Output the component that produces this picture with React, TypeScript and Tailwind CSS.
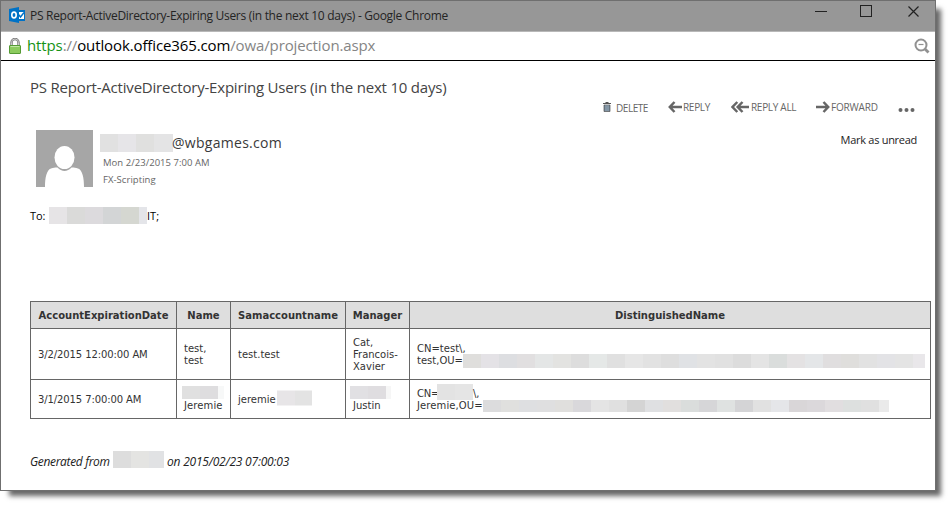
import React from "react";

const SEGOE = "font-['Open_Sans','Noto_Sans',sans-serif]";

function Mosaic({ colors, className, last = "w-[18px]" }: { colors: string[]; className: string; last?: string }) {
  return (
    <span className={`flex shrink-0 ${className}`}>
      {colors.map((c, i) => (
        <span key={i} className={`h-full shrink-0 ${i === colors.length - 1 ? last : "w-[18px]"} ${c}`} />
      ))}
    </span>
  );
}

const dnFirst = [
  "bg-[#dfdedc]", "bg-[#e4e2e6]", "bg-[#dddee1]", "bg-[#e1dfe0]", "bg-[#e4e6e6]", "bg-[#e3e3e1]", "bg-[#dddddd]",
  "bg-[#e5e8e7]", "bg-[#e0e0e0]", "bg-[#e6e6e6]", "bg-[#e2e2e2]", "bg-[#dedede]", "bg-[#e0e2e5]", "bg-[#e3e3e3]",
  "bg-[#e1e1e1]", "bg-[#dcdcdc]", "bg-[#e4e4e4]", "bg-[#dadddc]", "bg-[#e4e2e3]", "bg-[#e4e6e8]", "bg-[#e0dedf]",
  "bg-[#dfdedc]", "bg-[#e2e2e2]", "bg-[#e3e3e6]", "bg-[#e4e4e4]", "bg-[#e9e7ea]",
];
const dnSecond = [
  "bg-[#dcdcdd]", "bg-[#e0e0de]", "bg-[#dedfe1]", "bg-[#dfdfe0]", "bg-[#e0dfdd]", "bg-[#d9d8db]", "bg-[#e4e4e4]",
  "bg-[#e0e0e0]", "bg-[#d4d4d4]", "bg-[#dfe0e2]", "bg-[#e1dfde]", "bg-[#dadddc]", "bg-[#d6d6d8]", "bg-[#dfe2e1]",
  "bg-[#d4d4d6]", "bg-[#e1e1e1]", "bg-[#e5e6e9]", "bg-[#d9d6d8]", "bg-[#dbd8db]", "bg-[#e1dee0]", "bg-[#dde0df]",
  "bg-[#e0e0e0]", "bg-[#eaeaea]",
];

function TitleBar() {
  return (
    <div className="flex h-[30px] shrink-0 items-start bg-[#979797] pl-2">
      <svg className="mt-[6px] shrink-0" width="16" height="17" viewBox="0 0 16 17">
        <rect x="8" y="3" width="8" height="11" fill="#0072c6" />
        <path d="M9 5h6v7H9z" fill="#fff" />
        <path d="M9.500 7.500l2 2.500 3.500-4.500" fill="none" stroke="#0072c6" strokeWidth="1.400" />
        <path d="M0 2L10 0v16L0 14z" fill="#0072c6" />
        <ellipse cx="5" cy="8" rx="2.200" ry="2.900" fill="none" stroke="#fff" strokeWidth="1.600" />
      </svg>
      <span className="ml-[5px] mt-[5px] whitespace-nowrap text-[12px] leading-5 tracking-[-0.29px] text-[#242424]">
        PS Report-ActiveDirectory-Expiring Users (in the next 10 days) - Google Chrome
      </span>
      <svg className="ml-auto mr-[14px] mt-[3px]" width="106" height="16" viewBox="0 0 106 16" fill="none" stroke="#222" shapeRendering="crispEdges">
        <path d="M0 7.500h12" />
        <rect x="45.500" y="1.500" width="11" height="11" />
        <path d="M93.500 2.500l10 10M103.500 2.500l-10 10" shapeRendering="auto" strokeWidth="1.200" />
      </svg>
    </div>
  );
}

function AddressBar() {
  return (
    <div className="flex h-[30px] shrink-0 items-start border-b border-t border-b-black border-t-[#b8b8b8] bg-white pl-2">
      <svg className="mt-[6px] shrink-0" width="12" height="16" viewBox="0 0 12 16">
        <path d="M2.500 8V4.500a3.500 3.500 0 0 1 7 0V8" fill="none" stroke="#777" strokeWidth="2.400" />
        <path d="M2.500 8V4.500a3.500 3.500 0 0 1 7 0V8" fill="none" stroke="#ccc" strokeWidth="1" />
        <rect x=".5" y="7.500" width="11" height="8" rx=".5" fill="#8ccb5e" stroke="#559a35" />
        <path d="M1.500 8.500h9" stroke="#c1e6a4" />
      </svg>
      <span className="ml-[6px] whitespace-nowrap text-[15px] leading-[26px] tracking-[-0.12px] text-[#858585]">
        <span className="text-[#159315]">https</span>://<span className="text-black">outlook.office365.com</span>/owa/projection.aspx
      </span>
      <svg className="ml-auto mr-[5px] mt-[6px]" width="16" height="16" viewBox="0 0 16 16" fill="none" stroke="#919191">
        <circle cx="7" cy="7" r="5.500" strokeWidth="2" />
        <path d="M11 11l3.500 3.500" strokeWidth="2.800" />
        <path d="M4.500 6.500h5" strokeWidth="1.200" />
      </svg>
    </div>
  );
}

function Actions() {
  return (
    <div className="flex h-5 items-center whitespace-nowrap pl-[573px] text-[10px] leading-5 text-[#666]">
      <svg width="8" height="10" viewBox="0 0 8 10" className="shrink-0">
        <path d="M0 1.500h8M2.500 .5h3" stroke="#555" />
        <path d="M1 3h6v6.500H1z" fill="#708496" stroke="#555" strokeWidth=".7" />
        <path d="M3 3v6M5 3v6" stroke="#a9b9c5" strokeWidth=".7" />
      </svg>
      <span className="ml-[5px] mt-[2px] w-[52px] tracking-[-0.45px]">DELETE</span>
      <svg width="14" height="12" viewBox="0 0 14 12" fill="none" stroke="#666" className="shrink-0">
        <path d="M1.500 6H14M6.500 1L1.800 6l4.700 5" strokeWidth="2.500" />
      </svg>
      <span className="ml-[1px] w-[48px] tracking-[-0.3px]">REPLY</span>
      <svg width="18" height="12" viewBox="0 0 18 12" fill="none" stroke="#666" className="shrink-0">
        <path d="M6 6h12M6.300 1L1.500 6l4.800 5M11.500 1L6.700 6l4.800 5" strokeWidth="2.500" />
      </svg>
      <span className="ml-[2px] w-[65px] tracking-[-0.3px]">REPLY ALL</span>
      <svg width="14" height="12" viewBox="0 0 14 12" fill="none" stroke="#666" className="shrink-0">
        <path d="M0 6h12.500M7.500 1l4.700 5-4.700 5" strokeWidth="2.500" />
      </svg>
      <span className="ml-[1px] w-[67px] tracking-[-0.2px]">FORWARD</span>
      <svg width="17" height="6" viewBox="0 0 17 6" fill="#666" className="mt-[6px] shrink-0">
        <circle cx="2.500" cy="3" r="2" /><circle cx="8.500" cy="3" r="2" /><circle cx="14.500" cy="3" r="2" />
      </svg>
    </div>
  );
}

function Sender() {
  return (
    <div className="flex pl-[6px]">
      <svg width="57" height="57" viewBox="0 0 57 57" className="mt-[1px] shrink-0">
        <rect width="57" height="57" fill="#a6a6a6" />
        <ellipse cx="28.500" cy="27.500" rx="10" ry="11.500" fill="#fff" />
        <path d="M9 57c0-9 1.500-17 6-18.500 3-1 5-1.200 6.500-1 4 4.600 10 4.600 14 0 1.500-.2 3.500 0 6.500 1C46.500 40 48 48 48 57z" fill="#fff" />
      </svg>
      <div className="ml-[7px] flex flex-col">
        <div className="flex h-[27px] items-center">
          <Mosaic colors={["bg-[#e1e1e1]", "bg-[#e6e5e8]", "bg-[#e0e0df]", "bg-[#e4e4e5]"]} last="w-[19px]" className="h-[18px]" />
          <span className="-ml-px text-[14px] leading-5 tracking-[0.28px] text-[#3a3a3a]">@wbgames.com</span>
        </div>
        <span className="ml-[3px] text-[9.5px] leading-[14px] tracking-[0.04px] text-[#666]">Mon 2/23/2015 7:00 AM</span>
        <span className="ml-[3px] mt-[3px] text-[9.5px] leading-[14px] tracking-[0.05px] text-[#666]">FX-Scripting</span>
      </div>
      <span className="ml-auto mr-[18px] mt-[1px] text-[11px] leading-5 tracking-[-0.28px] text-[#222]">Mark as unread</span>
    </div>
  );
}

const cell = "flex flex-col justify-center border-l border-t border-[#666] pl-[7px] pt-[2px]";
const head = "flex items-center justify-center border-l border-t border-[#666] bg-[#dedede] pt-[2px] text-[10px] font-bold";

function ReportTable() {
  return (
    <div className="grid w-[901px] grid-cols-[146px_54px_115px_64px_521px] grid-rows-[27px_51px_39px] whitespace-nowrap border-b border-r border-[#666] font-['DejaVu_Sans',sans-serif] text-[10px] leading-[12px] text-[#333]">
      {["AccountExpirationDate", "Name", "Samaccountname", "Manager", "DistinguishedName"].map((h) => (
        <div key={h} className={head}>{h}</div>
      ))}
      <div className={cell}><span className="tracking-[-0.1px]">3/2/2015 12:00:00 AM</span></div>
      <div className={cell}><span>test,</span><span>test</span></div>
      <div className={cell}>test.test</div>
      <div className={cell}><span>Cat,</span><span>Francois-</span><span>Xavier</span></div>
      <div className={cell}>
        <span>CN=test\,</span>
        <span className="flex h-3"><span className="w-[46px]">test,OU=</span><Mosaic colors={dnFirst} last="w-[12px]" className="-mt-px h-[14px]" /></span>
      </div>
      <div className={cell}><span className="tracking-[-0.1px]">3/1/2015 7:00:00 AM</span></div>
      <div className={cell}>
        <Mosaic colors={["bg-[#e0e0e0]", "bg-[#dedddf]", "bg-[#f7f8f8]"]} last="w-[6px]" className="-ml-[2px] -mt-[2px] mb-[1px] h-[13px]" />
        <span className="tracking-[0.1px]">Jeremie</span>
      </div>
      <div className={cell}>
        <span className="flex items-center"><span className="w-[39px]">jeremie</span><Mosaic colors={["bg-[#e7e5e7]", "bg-[#e3e3e3]"]} last="w-[17px]" className="-my-2 h-[15px] -translate-y-[2.5px]" /></span>
      </div>
      <div className={cell}>
        <Mosaic colors={["bg-[#e1e0e3]", "bg-[#dfdde0]", "bg-[#f6f6f6]"]} last="w-[5px]" className="-ml-[3px] -mt-[2px] mb-[1px] h-[13px]" />
        <span>Justin</span>
      </div>
      <div className={cell}>
        <span className="flex h-3"><span className="w-[20px] tracking-[-0.2px]">CN=</span><Mosaic colors={["bg-[#e3e3e3]", "bg-[#e5e5e5]"]} className="-mt-[4px] h-4" /><span>\,</span></span>
        <span className="flex h-3"><span className="w-[66px] tracking-[0.1px]">Jeremie,OU=</span><Mosaic colors={dnSecond} last="w-[10px]" className="h-[12px]" /></span>
      </div>
    </div>
  );
}

export default function App() {
  return (
    <div className={`h-[506px] w-[951px] overflow-hidden bg-white ${SEGOE}`}>
      <div className="flex h-[491px] w-[936px] flex-col border border-[#6f6f6f] bg-white shadow-[7px_7px_5px_-2px_rgba(0,0,0,0.6)]">
        <TitleBar />
        <AddressBar />
        <main className="flex flex-col pl-[29px]">
          <h1 className="mt-[15px] whitespace-nowrap text-[15px] leading-[22px] tracking-[-0.2px] text-[#444]">
            PS Report-ActiveDirectory-Expiring Users (in the next 10 days)
          </h1>
          <div className="-mt-[1px]"><Actions /></div>
          <div className="mt-[12px]"><Sender /></div>
          <div className="mt-[20px] flex h-[17px] items-center text-[11px] text-black">
            <span className="mt-px w-[19px] tracking-[-0.1px]">To:</span>
            <Mosaic colors={["bg-[#e6e4e6]", "bg-[#dadad9]", "bg-[#dcdadd]", "bg-[#d3d5d6]", "bg-[#d5d7d1]", "bg-[#e4e5e9]"]} last="w-[8px]" className="h-[17px]" />
            <span className="mt-px">IT;</span>
          </div>
          <div className="mt-[77px]"><ReportTable /></div>
          <div className="mt-[31px] flex h-[18px] items-center whitespace-nowrap text-[12px] italic text-[#222]">
            <span className="mt-[5px] w-[83px] tracking-[-0.33px]">Generated from</span>
            <Mosaic colors={["bg-[#dddddd]", "bg-[#e4e4e2]", "bg-[#e1e2e4]"]} last="w-[15px]" className="h-[17px]" />
            <span className="ml-[3px] mt-[5px] tracking-[-0.22px]">on 2015/02/23 07:00:03</span>
          </div>
        </main>
      </div>
    </div>
  );
}
